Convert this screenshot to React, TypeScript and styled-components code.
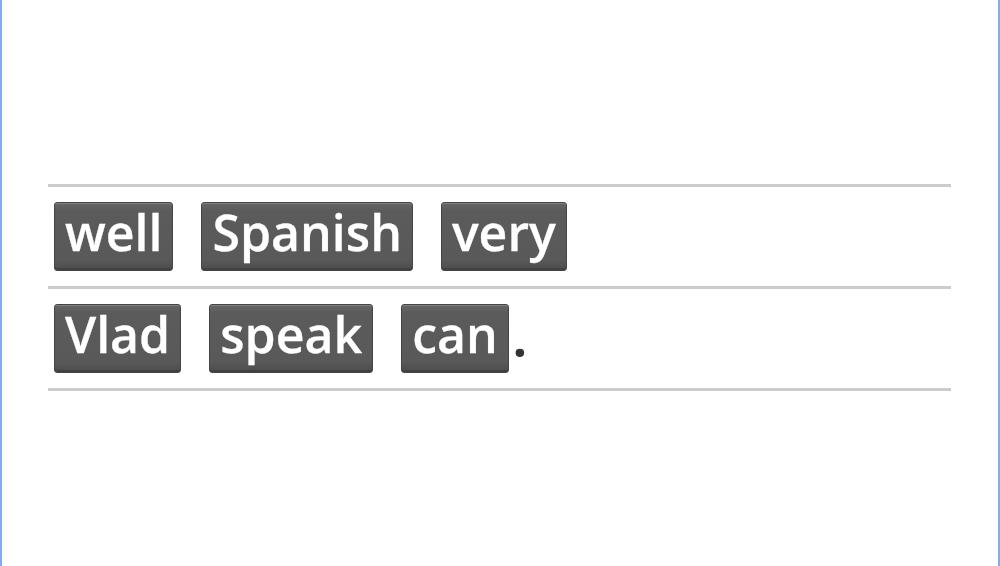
import React from 'react';
import styled, { createGlobalStyle } from 'styled-components';

const GlobalStyle = createGlobalStyle`
  html, body {
    margin: 0;
    padding: 0;
    background: #fff;
  }
  body {
    font-family: "Open Sans", "Liberation Sans", sans-serif;
  }
`;

const Frame = styled.div`
  box-sizing: border-box;
  height: 566px;
  border-left: 2px solid #86aaea;
  border-right: 2px solid #86aaea;
  padding: 184px 47px 0 46px;
  overflow: hidden;
`;

const Lines = styled.div`
  border-bottom: 3px solid #cccccc;
`;

const Row = styled.div`
  display: flex;
  align-items: center;
  gap: 28px;
  border-top: 3px solid #cccccc;
  padding: 15px 6px;
`;

const Tile = styled.span`
  box-sizing: border-box;
  display: inline-flex;
  align-items: center;
  height: 69px;
  padding: 0 10px 9px;
  background: linear-gradient(#666666, #5b5b5b 12%, #595959 85%, #4c4c4c);
  border: 1px solid #454545;
  border-radius: 3px;
  box-shadow: inset 0 1px 0 rgba(255, 255, 255, 0.18), inset 0 -2px 0 rgba(0, 0, 0, 0.15);
  color: #fff;
  font-size: 50px;
  font-weight: 600;
  line-height: 1;
  -webkit-text-stroke: 0.3px #fff;
`;

const Word = styled.span`
  display: inline-flex;
  align-items: flex-end;
  gap: 4px;
`;

const Stop = styled.span`
  color: #333;
  font-size: 50px;
  font-weight: 700;
  line-height: 1;
  padding-bottom: 10px;
`;

const rows: { word: string; tail?: string }[][] = [
  [{ word: 'well' }, { word: 'Spanish' }, { word: 'very' }],
  [{ word: 'Vlad' }, { word: 'speak' }, { word: 'can', tail: '.' }],
];

export default function App() {
  return (
    <>
      <GlobalStyle />
      <Frame>
        <Lines>
          {rows.map((row, i) => (
            <Row key={i}>
              {row.map((w) =>
                w.tail ? (
                  <Word key={w.word}>
                    <Tile>{w.word}</Tile>
                    <Stop>{w.tail}</Stop>
                  </Word>
                ) : (
                  <Tile key={w.word}>{w.word}</Tile>
                )
              )}
            </Row>
          ))}
        </Lines>
      </Frame>
    </>
  );
}
